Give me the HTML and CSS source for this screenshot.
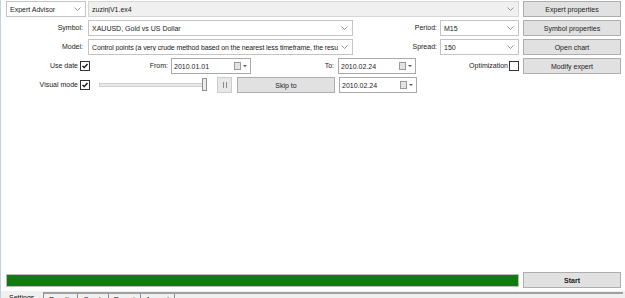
FILE: index.html
```html
<!DOCTYPE html>
<html lang="en">
<head>
    <meta charset="UTF-8" />
    <title>Strategy Tester</title>
    <link rel="stylesheet" href="styles.css">
</head>
<body>
    <div class="tester">
        <div class="form">
            <!-- row 1: expert -->
            <div class="row">
                <div class="combo w-type">
                    <span class="combo-text">Expert Advisor</span>
                    <svg class="chev" viewBox="0 0 7 4"><path d="M0.5 0.5 L3.5 3.5 L6.5 0.5" /></svg>
                </div>
                <div class="combo combo-off w-expert">
                    <span class="combo-text">zuzinjV1.ex4</span>
                    <svg class="chev" viewBox="0 0 7 4"><path d="M0.5 0.5 L3.5 3.5 L6.5 0.5" /></svg>
                </div>
                <button class="btn w-btn">Expert properties</button>
            </div>

            <!-- row 2: symbol / period -->
            <div class="row">
                <label class="lbl w-lbl">Symbol:</label>
                <div class="combo w-wide">
                    <span class="combo-text">XAUUSD, Gold vs US Dollar</span>
                    <svg class="chev" viewBox="0 0 7 4"><path d="M0.5 0.5 L3.5 3.5 L6.5 0.5" /></svg>
                </div>
                <label class="lbl w-lbl2">Period:</label>
                <div class="combo w-small">
                    <span class="combo-text">M15</span>
                    <svg class="chev" viewBox="0 0 7 4"><path d="M0.5 0.5 L3.5 3.5 L6.5 0.5" /></svg>
                </div>
                <button class="btn w-btn">Symbol properties</button>
            </div>

            <!-- row 3: model / spread -->
            <div class="row">
                <label class="lbl w-lbl">Model:</label>
                <div class="combo w-wide">
                    <span class="combo-text long">Control points (a very crude method based on the nearest less timeframe, the resu</span>
                    <svg class="chev" viewBox="0 0 7 4"><path d="M0.5 0.5 L3.5 3.5 L6.5 0.5" /></svg>
                </div>
                <label class="lbl w-lbl2">Spread:</label>
                <div class="combo w-small">
                    <span class="combo-text">150</span>
                    <svg class="chev" viewBox="0 0 7 4"><path d="M0.5 0.5 L3.5 3.5 L6.5 0.5" /></svg>
                </div>
                <button class="btn w-btn">Open chart</button>
            </div>

            <!-- row 4: dates -->
            <div class="row">
                <label class="lbl w-chk-lbl">Use date</label>
                <span class="check on"><svg viewBox="0 0 8 8"><path d="M1.5 4 L3.2 5.6 L6.5 2" /></svg></span>
                <label class="lbl w-from">From:</label>
                <div class="date w-date1">
                    <span class="combo-text">2010.01.01</span>
                    <span class="cal"></span><span class="tri"></span>
                </div>
                <label class="lbl w-to">To:</label>
                <div class="date w-date2">
                    <span class="combo-text">2010.02.24</span>
                    <span class="cal"></span><span class="tri"></span>
                </div>
                <label class="lbl w-opt">Optimization</label>
                <span class="check"></span>
                <button class="btn w-btn">Modify expert</button>
            </div>

            <!-- row 5: visual mode -->
            <div class="row">
                <label class="lbl w-chk-lbl">Visual mode</label>
                <span class="check on"><svg viewBox="0 0 8 8"><path d="M1.5 4 L3.2 5.6 L6.5 2" /></svg></span>
                <div class="slider">
                    <span class="track"></span>
                    <span class="thumb"></span>
                </div>
                <button class="btn pause"><span class="bar"></span><span class="bar"></span></button>
                <button class="btn skip">Skip to</button>
                <div class="date w-date2 date-gap">
                    <span class="combo-text">2010.02.24</span>
                    <span class="cal"></span><span class="tri"></span>
                </div>
            </div>
        </div>

        <div class="run">
            <div class="progress"><div class="progress-fill"></div></div>
            <button class="btn start">Start</button>
        </div>

        <div class="tabs">
            <span class="tab tab-active">Settings</span>
            <div class="tab-strip">
                <span class="tab">Results</span>
                <span class="tab">Graph</span>
                <span class="tab">Report</span>
                <span class="tab">Journal</span>
            </div>
        </div>
    </div>
</body>
</html>
```

FILE: styles.css
```css
/* base */
* { box-sizing: border-box; }
html, body { margin: 0; padding: 0; }
body { background: #ffffff; font-family: "Liberation Sans", Arial, sans-serif; font-size: 7px; color: #1b1b1b; overflow: hidden; }

.tester { height: 298px; border-left: 1px solid #c3d0dd; display: flex; flex-direction: column; }

/* form rows */
.form { padding-top: 1px; }
.row { display: flex; align-items: center; height: 16px; margin-bottom: 3px; }

.lbl { display: block; text-align: right; white-space: nowrap; line-height: 16px; }
.w-lbl { width: 82px; margin-right: 5px; }
.w-lbl2 { width: 84px; margin-right: 3px; }
.w-chk-lbl { width: 77px; margin-right: 2px; }
.w-from { width: 78px; margin-right: 3px; }
.w-to { width: 83px; margin-right: 4px; }
.w-opt { width: 92px; margin-right: 1px; }

/* combos */
.combo, .date { display: flex; align-items: center; height: 16px; border: 1px solid #c4c4c4; background: #ffffff; padding-left: 3px; padding-right: 4px; overflow: hidden; }
.combo-text { flex: 1; white-space: nowrap; overflow: hidden; }
.long { letter-spacing: -0.12px; }
.combo-off { background: #f0f0f0; border-color: #d6d6d6; }
.chev { width: 7px; height: 4px; flex: none; margin-left: 3px; }
.chev path { fill: none; stroke: #8a8a8a; stroke-width: 0.9; }

.w-type { width: 80px; margin-left: 5px; }
.w-expert { width: 431px; margin-left: 2px; }
.w-wide { width: 265px; }
.w-small { width: 79px; }

/* date pickers */
.date { border-color: #a9a9a9; padding-left: 2px; padding-right: 3px; }
.w-date1 { width: 80px; }
.w-date2 { width: 78px; }
.date-gap { margin-left: 4px; }
.cal { width: 7px; height: 8px; border: 1px solid #9a9a9a; background: #e4e4e4; flex: none; }
.tri { width: 0; height: 0; margin-left: 2px; border-left: 2px solid transparent; border-right: 2px solid transparent; border-top: 2px solid #555; flex: none; }

/* checkboxes */
.check { width: 10px; height: 10px; border: 1px solid #333333; background: #ffffff; flex: none; display: flex; align-items: center; justify-content: center; }
.check svg { width: 8px; height: 8px; }
.check path { fill: none; stroke: #111; stroke-width: 1.4; }

/* buttons */
.btn { font-family: inherit; font-size: 7px; color: #1b1b1b; background: #e1e1e1; border: 1px solid #adadad; height: 16px; padding: 0; margin: 0; flex: none; }
.w-btn { width: 98px; margin-left: 4px; }
.pause { width: 15px; margin-left: 10px; background: #e8e8e8; border-color: #cccccc; display: flex; align-items: center; justify-content: center; gap: 2px; }
.bar { display: block; width: 1px; height: 6px; background: #8c8c8c; }
.skip { width: 98px; margin-left: 5px; }

/* slider */
.slider { position: relative; width: 108px; height: 16px; margin-left: 9px; display: flex; align-items: center; }
.track { display: block; width: 100%; height: 4px; border: 1px solid #d0d0d0; background: #e9e9e9; }
.thumb { position: absolute; right: 0; top: 1px; width: 5px; height: 13px; background: #ececec; border: 1px solid #8f8f8f; }

/* run bar */
.run { margin-top: auto; display: flex; align-items: center; height: 16px; margin-bottom: 3px; }
.progress { width: 513px; height: 13px; margin-left: 5px; border: 1px solid #bcbcbc; background: #e6e6e6; padding: 0; }
.progress-fill { width: 100%; height: 100%; background: #117a10; }
.start { width: 98px; margin-left: 4px; font-weight: bold; }

/* bottom tabs */
.tabs { height: 7px; background: #f0f0f0; display: flex; align-items: flex-start; overflow: hidden; border-top: 1px solid #f0f0f0; }
.tab { display: inline-block; padding: 1px 4px; font-size: 7px; line-height: 9px; white-space: nowrap; }
.tab-active { width: 42px; padding-left: 8px; background: #f0f0f0; color: #111; }
.tab-strip { flex: 1; border-top: 2px solid #a0a0a0; border-left: 1px solid #8c8c8c; margin-right: 2px; display: flex; }
.tab-strip .tab { border-right: 1px solid #8c8c8c; padding: 1px 5px; color: #222; }
```
